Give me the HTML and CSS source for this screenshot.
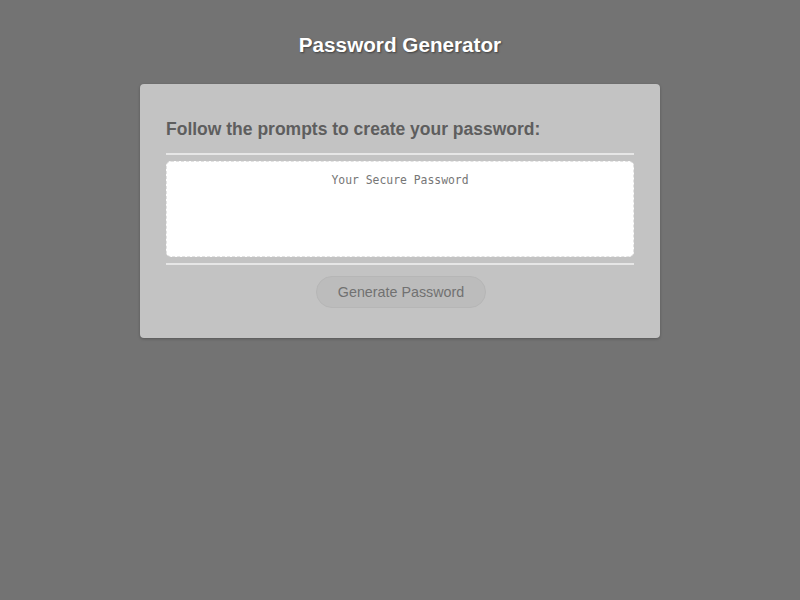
FILE: index.html
```html
<!DOCTYPE html>
<html lang="en">
<head>
<meta charset="utf-8">
<title>Password Generator</title>
<link rel="stylesheet" href="styles.css">
</head>
<body>
<div class="wrapper">
  <header class="page-header">
    <h1 class="title">Password Generator</h1>
  </header>
  <div class="card">
    <div class="card-header">
      <h2 class="card-title">Follow the prompts to create your password:</h2>
    </div>
    <div class="card-body">
      <textarea readonly class="password" placeholder="Your Secure Password" aria-label="Generated Password"></textarea>
    </div>
    <div class="card-footer">
      <button class="btn" disabled>Generate Password</button>
    </div>
  </div>
</div>
</body>
</html>
```

FILE: styles.css
```css
* {
  box-sizing: border-box;
}

html, body {
  margin: 0;
  padding: 0;
  height: 100%;
}

body {
  background: #737373;
  font-family: "Liberation Sans", Arial, sans-serif;
}

.wrapper {
  display: flex;
  flex-direction: column;
  align-items: center;
  padding-top: 32px;
}

.page-header {
  height: 52px;
}

.title {
  margin: 0;
  font-size: 20.7px;
  line-height: 26px;
  font-weight: bold;
  color: #ffffff;
  text-shadow: 1px 1px 2px rgba(0, 0, 0, 0.45);
  text-align: center;
}

.card {
  width: 520px;
  background: #c3c3c3;
  border-radius: 4px;
  box-shadow: 0 1px 3px rgba(0, 0, 0, 0.25);
  padding: 34px 26px 30px;
}

.card-title {
  margin: 0;
  font-size: 17.5px;
  line-height: 22px;
  font-weight: bold;
  color: #5e5e5e;
}

.card-header::after {
  content: "";
  display: block;
  height: 2px;
  background: #e6e6e6;
  margin-top: 13px;
}

.card-body {
  padding: 6px 0;
}

.password {
  display: block;
  width: 100%;
  height: 96px;
  resize: none;
  overflow: hidden;
  border: 1px dashed #e2e2e2;
  border-radius: 5px;
  background: #ffffff;
  padding: 11px 12px;
  font-family: "DejaVu Sans Mono", monospace;
  font-size: 11.4px;
  line-height: 14px;
  text-align: center;
  color: #555;
}

.password::placeholder {
  color: #767676;
  opacity: 1;
}

.card-footer {
  display: flex;
  flex-direction: column;
  align-items: center;
}

.card-footer::before {
  content: "";
  display: block;
  align-self: stretch;
  height: 2px;
  background: #e6e6e6;
  margin-bottom: 11px;
}

.btn {
  height: 32px;
  width: 170px;
  margin-left: 2px;
  border: 1px solid #b6b6b6;
  border-radius: 16px;
  background: #bcbcbc;
  color: #717171;
  font-family: "Liberation Sans", Arial, sans-serif;
  font-size: 14.3px;
  padding: 0;
}
```
